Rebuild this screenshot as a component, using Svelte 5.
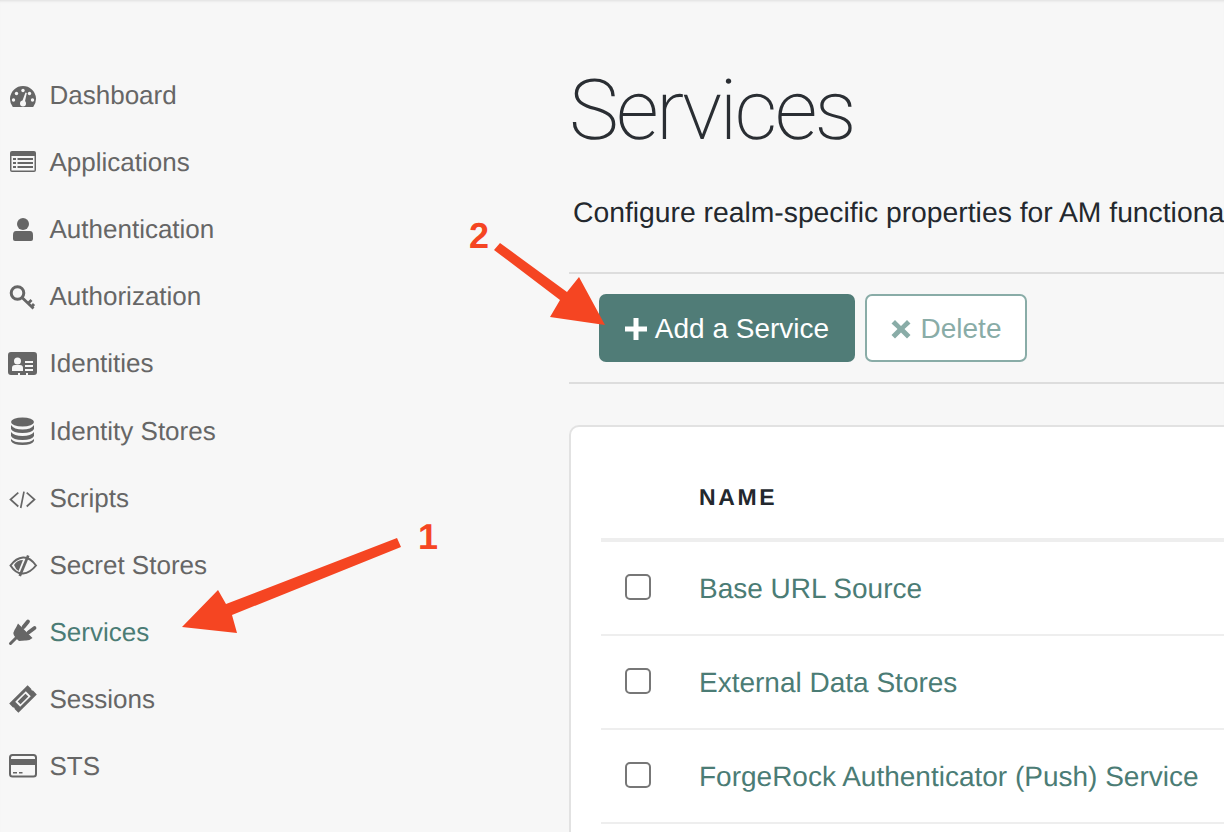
<script>
	const nav = [
		{ label: "Dashboard", icon: "dashboard" },
		{ label: "Applications", icon: "applications" },
		{ label: "Authentication", icon: "user" },
		{ label: "Authorization", icon: "key" },
		{ label: "Identities", icon: "card" },
		{ label: "Identity Stores", icon: "database" },
		{ label: "Scripts", icon: "code" },
		{ label: "Secret Stores", icon: "eye" },
		{ label: "Services", icon: "plug", active: true },
		{ label: "Sessions", icon: "ticket" },
		{ label: "STS", icon: "credit" }
	];

	const rows = ["Base URL Source", "External Data Stores", "ForgeRock Authenticator (Push) Service"];

	const bg = "#f7f7f7";
	const icons = {
		dashboard: `<path d="M4.800 26A13 13 0 1 1 25.200 26Z"/><g fill="${bg}"><circle cx="5.500" cy="19" r="1.700"/><circle cx="8.500" cy="12.500" r="1.700"/><circle cx="15" cy="9.500" r="1.700"/><circle cx="24.500" cy="19" r="1.700"/><circle cx="21.500" cy="12.500" r="1.700"/><circle cx="15" cy="22.500" r="3"/><path d="M13.600 22L17.500 11.500L18.800 12L16.400 23Z"/></g>`,
		applications: `<rect x="2" y="3" width="26" height="21" rx="2"/><rect x="3.500" y="8" width="23" height="14.500" fill="${bg}"/><path d="M5 10h3v2H5zM9.500 10H25v2H9.500zM5 14h3v2H5zM9.500 14H25v2H9.500zM5 18h3v2H5zM9.500 18H25v2H9.500z"/>`,
		user: `<circle cx="15" cy="9" r="6"/><path d="M8 16h14q3 0 3 4v4q0 2-2 2H7q-2 0-2-2v-4q0-4 3-4z"/>`,
		key: `<circle cx="9.500" cy="11" r="6.300" fill="none" stroke="#666" stroke-width="3"/><path d="M14 15.500L25.500 26.500M20 21.500l3.500-3.500M23.500 25l2.500-3" fill="none" stroke="#666" stroke-width="2.800"/>`,
		card: `<path d="M3 3h23q3 0 3 3v17q0 3-3 3h-6v-2h-2v2h-6v-2h-2v2H3q-3 0-3-3V6q0-3 3-3z"/><g fill="${bg}"><circle cx="9.500" cy="12" r="3.500"/><path d="M4 22v-3q0-3 3-3h5q3 0 3 3v3z"/><path d="M17 12h8v2h-8zM17 16h8v2h-8zM17 20h8v2h-8z"/></g>`,
		database: `<ellipse cx="14.500" cy="6" rx="11.500" ry="4.500"/><path d="M3 9q3 4.500 11.500 4.500T26 9v4q-2 4-11.500 4T3 13zM3 16q3 4 11.500 4T26 16v4q-2 4-11.500 4T3 20zM3 23q3 3.500 11.500 3.500T26 23v2q-2 4-11.500 4T3 25z"/>`,
		code: `<path d="M10.300 9.700L2.500 16.500l7.800 7M16 8.700L12.700 25M18.700 9.700l7.800 6.800-7.800 7" fill="none" stroke="#666" stroke-width="1.700"/>`,
		eye: `<path d="M2.500 15.500Q8 8 15 7.500t13 8Q22 23 15 23.500T2.500 15.500Z" fill="none" stroke="#666" stroke-width="2"/><path d="M19 5L10.500 25.500l2.500 1L21.500 6z"/><path d="M6 15q3-5 9-5l-4.500 11Q7.500 19 6 15z"/>`,
		plug: `<path d="M2.500 26.500L9 20" stroke="#666" stroke-width="3" stroke-linecap="round" fill="none"/><path d="M10 6.500L24.500 21Q21 24 17 23.500L11 24Q3 18 6.500 13Q8 11 10 6.500Z"/><path d="M15.500 10l4.500-5.500M20.500 15.500l6-4.500" stroke="#666" stroke-width="3.800" stroke-linecap="round" fill="none"/>`,
		ticket: `<g transform="rotate(-45 15 15)"><path d="M2 8.500h26v5q-1.500 1.500 0 3v5H2v-5q1.500-1.500 0-3z"/><rect x="7.500" y="11.500" width="15" height="7" fill="${bg}"/><rect x="9.500" y="13" width="11" height="4"/></g>`,
		credit: `<rect x="2" y="4" width="26" height="21.500" rx="2.500" fill="none" stroke="#666" stroke-width="2"/><rect x="2" y="8" width="26" height="6"/><path d="M5 21h4v1.500H5zM11 21h3.500v1.500H11z"/>`
	};
</script>

<div class="page">
	<aside class="sidebar">
		<ul>
			{#each nav as item}
				<li class:active={item.active}>
					<svg viewBox="0 0 30 30" width="30" height="30" fill="#666">{@html icons[item.icon]}</svg>
					<span>{item.label}</span>
				</li>
			{/each}
		</ul>
	</aside>

	<main>
		<h1>Services</h1>
		<p class="lead">Configure realm-specific properties for AM functionality</p>

		<div class="toolbar">
			<button class="primary">
				<svg viewBox="0 0 22 22" width="22" height="22" fill="#fff"><path d="M8.500 0h5v8.500H22v5h-8.500V22h-5v-8.500H0v-5h8.500z" /></svg>
				Add a Service
			</button>
			<button class="ghost">
				<svg viewBox="0 0 20 20" width="20" height="20" fill="#89aca7"><path d="M4 1l6 6 6-6 3.500 3.500-6 5.500 6 6-3.500 3.500-6-6-6 6L.5 16l6-6-6-5.500z" /></svg>
				Delete
			</button>
		</div>

		<section class="card">
			<div class="head">NAME</div>
			{#each rows as row}
				<div class="row">
					<span class="check"></span>
					<span class="name">{row}</span>
				</div>
			{/each}
		</section>
	</main>

	<svg class="arrows" viewBox="0 0 1224 832" width="1224" height="832" fill="#f54522">
		<polygon points="397,538 401,547 232,615 237,633 182,627 218,590 226,604" />
		<polygon points="500,243 494,250 560,300 550,317 605,325 579,277 567,292" />
	</svg>
	<span class="num one">1</span>
	<span class="num two">2</span>
</div>

<style>
	:global(body) {
		margin: 0;
		background: #f7f7f7;
		overflow: hidden;
	}

	.page {
		position: relative;
		display: flex;
		width: 1224px;
		height: 832px;
		overflow: hidden;
		font-family: "Liberation Sans", Arial, sans-serif;
		text-rendering: geometricPrecision;
		box-shadow: inset 0 3px 3px -2px rgba(0, 0, 0, 0.1);
	}

	.sidebar {
		width: 569px;
		flex: none;
		padding-top: 62px;
		box-sizing: border-box;
	}

	ul {
		list-style: none;
		margin: 0;
		padding: 0;
	}

	li {
		display: flex;
		align-items: center;
		height: 67.100px;
		padding-left: 8px;
		gap: 11.500px;
		font-size: 26px;
		color: #666;
	}

	li.active span {
		color: #4b7c75;
	}

	main {
		flex: none;
		width: 900px;
		padding-top: 60px;
	}

	h1 {
		margin: 0;
		height: 102px;
		font-family: Roboto, sans-serif;
		font-weight: 200;
		font-size: 84px;
		line-height: 102px;
		letter-spacing: -2.800px;
		color: #2a2e33;
	}

	.lead {
		margin: 31px 0 0 4px;
		height: 38px;
		font-size: 28.300px;
		line-height: 38px;
		color: #23282e;
		white-space: nowrap;
	}

	.toolbar {
		display: flex;
		gap: 10px;
		margin-top: 41px;
		padding: 20px 30px;
		height: 68px;
		border-top: 2px solid #ddd;
		border-bottom: 2px solid #ddd;
	}

	button {
		display: flex;
		align-items: center;
		justify-content: center;
		gap: 8px;
		height: 68px;
		box-sizing: border-box;
		border-radius: 7px;
		font: inherit;
		font-size: 28px;
		padding: 2px 0 0;
	}

	.primary {
		width: 256px;
		background: #507c77;
		border: none;
		color: #fff;
	}

	.ghost {
		width: 162px;
		gap: 10px;
		background: #fff;
		border: 2px solid #89aca7;
		color: #89aca7;
	}

	.card {
		margin-top: 41px;
		padding: 0 30px;
		height: 500px;
		background: #fff;
		border: 2px solid #e2e2e2;
		border-radius: 10px;
	}

	.head {
		height: 115px;
		box-sizing: border-box;
		padding: 57px 0 0 98px;
		font-size: 23px;
		line-height: 26px;
		font-weight: 700;
		letter-spacing: 2.600px;
		color: #23282e;
		border-bottom: 4px solid #eee;
	}

	.row {
		display: flex;
		align-items: center;
		height: 94px;
		box-sizing: border-box;
		padding-top: 1px;
		border-bottom: 2px solid #eee;
		font-size: 28px;
	}

	.check {
		width: 26px;
		height: 26px;
		box-sizing: border-box;
		margin: -3px 48px 0 24px;
		border: 2px solid #777;
		border-radius: 5px;
		background: #fff;
	}

	.name {
		color: #4b7c75;
		white-space: nowrap;
	}

	.arrows {
		position: absolute;
		left: 0;
		top: 0;
		pointer-events: none;
	}

	.num {
		position: absolute;
		font-size: 36px;
		line-height: 36px;
		font-weight: 700;
		color: #f54522;
	}

	.one {
		left: 418px;
		top: 519px;
	}

	.two {
		left: 469px;
		top: 218px;
	}
</style>
